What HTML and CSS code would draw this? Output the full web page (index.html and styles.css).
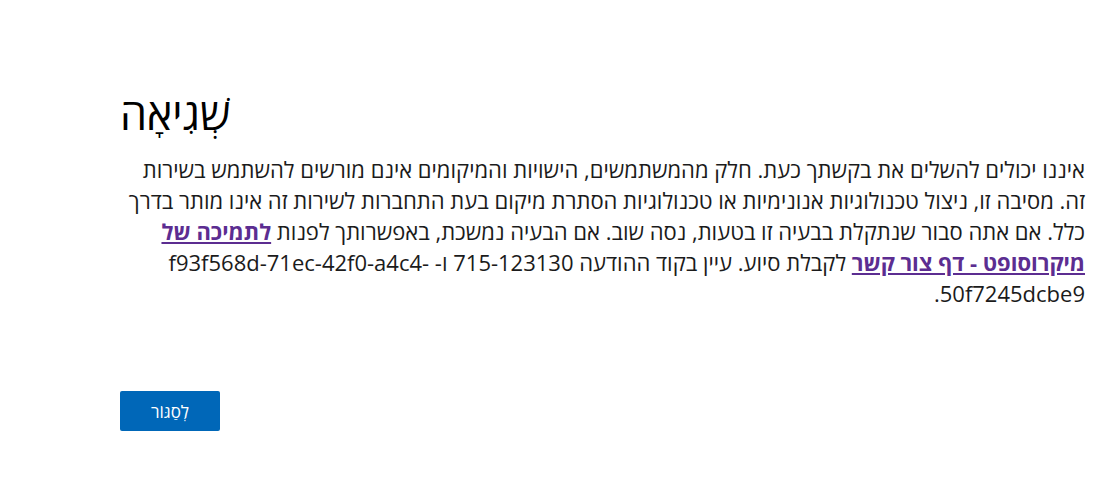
FILE: index.html
```html
<!DOCTYPE html>
<html lang="he" dir="rtl">
<head>
<meta charset="utf-8">
<title>שְׁגִיאָה</title>
<link rel="stylesheet" href="styles.css">
</head>
<body>
<main class="page">
  <h1 class="title">שְׁגִיאָה</h1>
  <p class="message">איננו יכולים להשלים את בקשתך כעת. חלק מהמשתמשים, הישויות והמיקומים אינם מורשים להשתמש בשירות זה. מסיבה זו, ניצול טכנולוגיות אנונימיות או טכנולוגיות הסתרת מיקום בעת התחברות לשירות זה אינו מותר בדרך כלל. אם אתה סבור שנתקלת בבעיה זו בטעות, נסה שוב. אם הבעיה נמשכת, באפשרותך לפנות <a class="link" href="#">לתמיכה של מיקרוסופט - דף צור קשר</a> לקבלת סיוע. עיין בקוד ההודעה 715-123130 ו- f93f568d-71ec-42f0-a4c4-50f7245dcbe9.</p>
  <div class="actions">
    <button class="btn" type="button">לְסַגּוֹר</button>
  </div>
</main>
</body>
</html>
```
FILE: styles.css
```css
html, body {
  margin: 0;
  padding: 0;
  background: #ffffff;
}
body {
  font-family: "Open Sans", "Noto Sans", "DejaVu Sans", sans-serif;
  color: #1b1b1b;
}
.page {
  padding: 86px 35px 0 120px;
}
.title {
  margin: 0;
  font-size: 43px;
  font-weight: 400;
  line-height: 56px;
  color: #000000;
  text-align: left;
}
.message {
  margin: 12px 0 0 -3px;
  font-size: 22px;
  line-height: 31px;
}
.link {
  color: #5c2d91;
  font-weight: 700;
  text-decoration: underline;
}
.actions {
  display: flex;
  justify-content: flex-end;
  margin-top: 82px;
}
.btn {
  width: 100px;
  height: 40px;
  border: none;
  border-radius: 2px;
  background: #0067b8;
  color: #ffffff;
  font-family: inherit;
  font-size: 17px;
  cursor: pointer;
}
```
